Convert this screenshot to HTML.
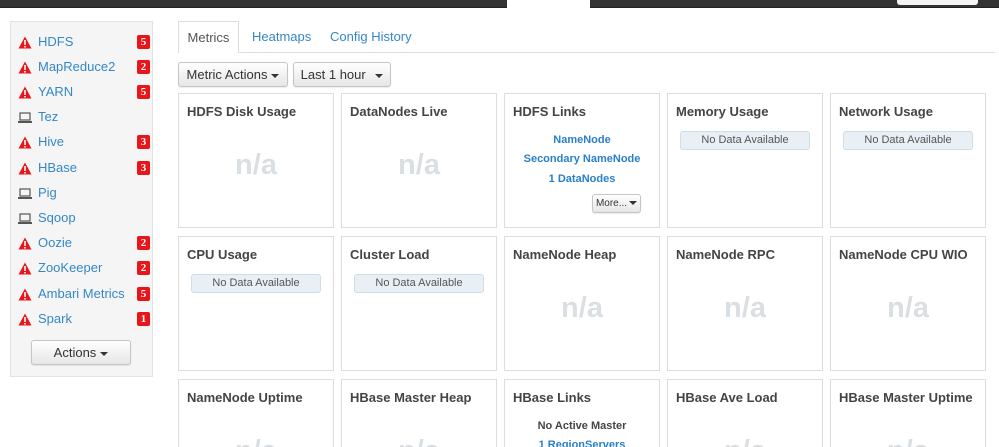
<!DOCTYPE html>
<html><head><style>
*{box-sizing:border-box;margin:0;padding:0}
html,body{width:999px;height:447px;overflow:hidden}
body{background:#fff;font-family:"Liberation Sans",Arial,sans-serif;font-size:13px;position:relative;color:#333}
.top{position:absolute;left:0;top:0;width:999px;height:8px;background:#333;border-bottom:1px solid #222}
.abs{position:absolute}
.side{left:10px;top:21px;width:143px;height:356px;background:#f5f5f5;border:1px solid #e3e3e3}
.item{position:absolute;left:18px;height:20px;width:132px;color:#3587c8;font-size:13px;line-height:20px}
.item .ic{position:absolute;left:0;top:0;width:14px;text-align:center}
.item .t{position:absolute;left:20px}
.badge{position:absolute;left:119px;top:3px;width:13px;height:14px;background:#e8161b;color:#fff;font-size:11px;font-weight:bold;text-align:center;line-height:14px;border-radius:2px;font-family:"Liberation Serif",serif}
.btn{position:absolute;border:1px solid #c5c5c5;border-radius:3px;background:linear-gradient(#fff,#e6e6e6);color:#333;text-align:center;box-shadow:0 1px 1px rgba(0,0,0,.08)}
.caret{display:inline-block;width:0;height:0;border-left:4px solid transparent;border-right:4px solid transparent;border-top:4px solid #333;vertical-align:middle;margin-left:4px}
.card{position:absolute;width:156px;height:135px;border:1px solid #ddd;background:#fff}
.card h4{position:absolute;left:8px;top:10px;font-size:13px;font-weight:bold;color:#444}
.na{position:absolute;left:0;width:100%;top:55px;text-align:center;font-size:29px;font-weight:bold;color:#dadfe3}
.nd{position:absolute;left:12px;right:12px;top:37px;height:19px;background:#e8f0f5;border:1px solid #cfdde6;border-radius:3px;text-align:center;font-size:11px;line-height:17px;color:#555}
.lk{position:absolute;left:0;width:100%;text-align:center;font-size:11px;font-weight:bold;color:#2a80c6}
</style></head><body>
<div class="top"></div>
<div class="abs" style="left:507px;top:0;width:83px;height:9px;background:#fff"></div>
<div class="abs" style="left:897px;top:0;width:81px;height:5px;background:#f4f4f4;border-radius:0 0 3px 3px"></div>

<div class="abs side"></div>
<div id="items"></div>
<div class="btn" style="left:31px;top:340px;width:100px;height:25px;line-height:23px">Actions<span class="caret"></span></div>

<div class="abs" style="left:178px;top:52px;width:817px;height:1px;background:#ddd"></div>
<div class="abs" style="left:178px;top:21px;width:61px;height:32px;border:1px solid #ddd;border-bottom:none;background:#fff;text-align:center;line-height:31px;color:#555">Metrics</div>
<div class="abs" style="left:252px;top:29px;color:#3587c8">Heatmaps</div>
<div class="abs" style="left:330px;top:29px;color:#3587c8">Config History</div>

<div class="btn" style="left:178px;top:62px;width:110px;height:25px;line-height:23px">Metric Actions<span class="caret"></span></div>
<div class="btn" style="left:293px;top:62px;width:98px;height:25px;line-height:23px">Last 1 hour <span class="caret" style="margin-left:6px"></span></div>

<div id="cards"></div>
<script>
var it=[["HDFS",5],["MapReduce2",2],["YARN",5],["Tez",0],["Hive",3],["HBase",3],["Pig",0],["Sqoop",0],["Oozie",2],["ZooKeeper",2],["Ambari Metrics",5],["Spark",1]];
var h="";
it.forEach(function(a,i){var y=31.5+i*25.2;
var ic=a[1]?'<svg width="14" height="13" viewBox="0 0 14 13" style="margin-top:4px"><path d="M7 0.5L13.5 12.5H0.5Z" fill="#e8161b"/><rect x="6.2" y="4" width="1.6" height="5" fill="#fff"/><rect x="6.2" y="10" width="1.6" height="1.5" fill="#fff"/></svg>':'<svg width="14" height="12" viewBox="0 0 14 12" style="margin-top:5px"><rect x="2" y="1" width="10" height="7" fill="none" stroke="#555" stroke-width="1.2"/><rect x="0" y="9" width="14" height="2" fill="#555"/></svg>';
h+='<div class="item" style="top:'+y+'px"><span class="ic">'+ic+'</span><span class="t">'+a[0]+'</span>'+(a[1]?'<span class="badge">'+a[1]+'</span>':'')+'</div>';});
document.getElementById("items").innerHTML=h;
var xs=[178,341,504,667,830],ys=[93,236,379];
var c=[["HDFS Disk Usage","na"],["DataNodes Live","na"],["HDFS Links","hl"],["Memory Usage","nd"],["Network Usage","nd"],
["CPU Usage","nd"],["Cluster Load","nd"],["NameNode Heap","na"],["NameNode RPC","na"],["NameNode CPU WIO","na"],
["NameNode Uptime","na"],["HBase Master Heap","na"],["HBase Links","hb"],["HBase Ave Load","na"],["HBase Master Uptime","na"]];
var s="";
c.forEach(function(a,i){var x=xs[i%5],y=ys[Math.floor(i/5)];var b="";
if(a[1]=="na")b='<div class="na">n/a</div>';
else if(a[1]=="nd")b='<div class="nd">No Data Available</div>';
else if(a[1]=="hl")b='<div class="lk" style="top:40px">NameNode</div><div class="lk" style="top:59px">Secondary NameNode</div><div class="lk" style="top:79px">1 DataNodes</div><div class="btn" style="left:87px;top:100px;width:49px;height:19px;font-size:10px;line-height:17px">More...<span class="caret" style="margin-left:2px"></span></div>';
else b='<div class="lk" style="top:40px;color:#444">No Active Master</div><div class="lk" style="top:59px">1 RegionServers</div>';
s+='<div class="card" style="left:'+x+'px;top:'+y+'px"><h4>'+a[0]+'</h4>'+b+'</div>';});
document.getElementById("cards").innerHTML=s;
</script>
</body></html>
